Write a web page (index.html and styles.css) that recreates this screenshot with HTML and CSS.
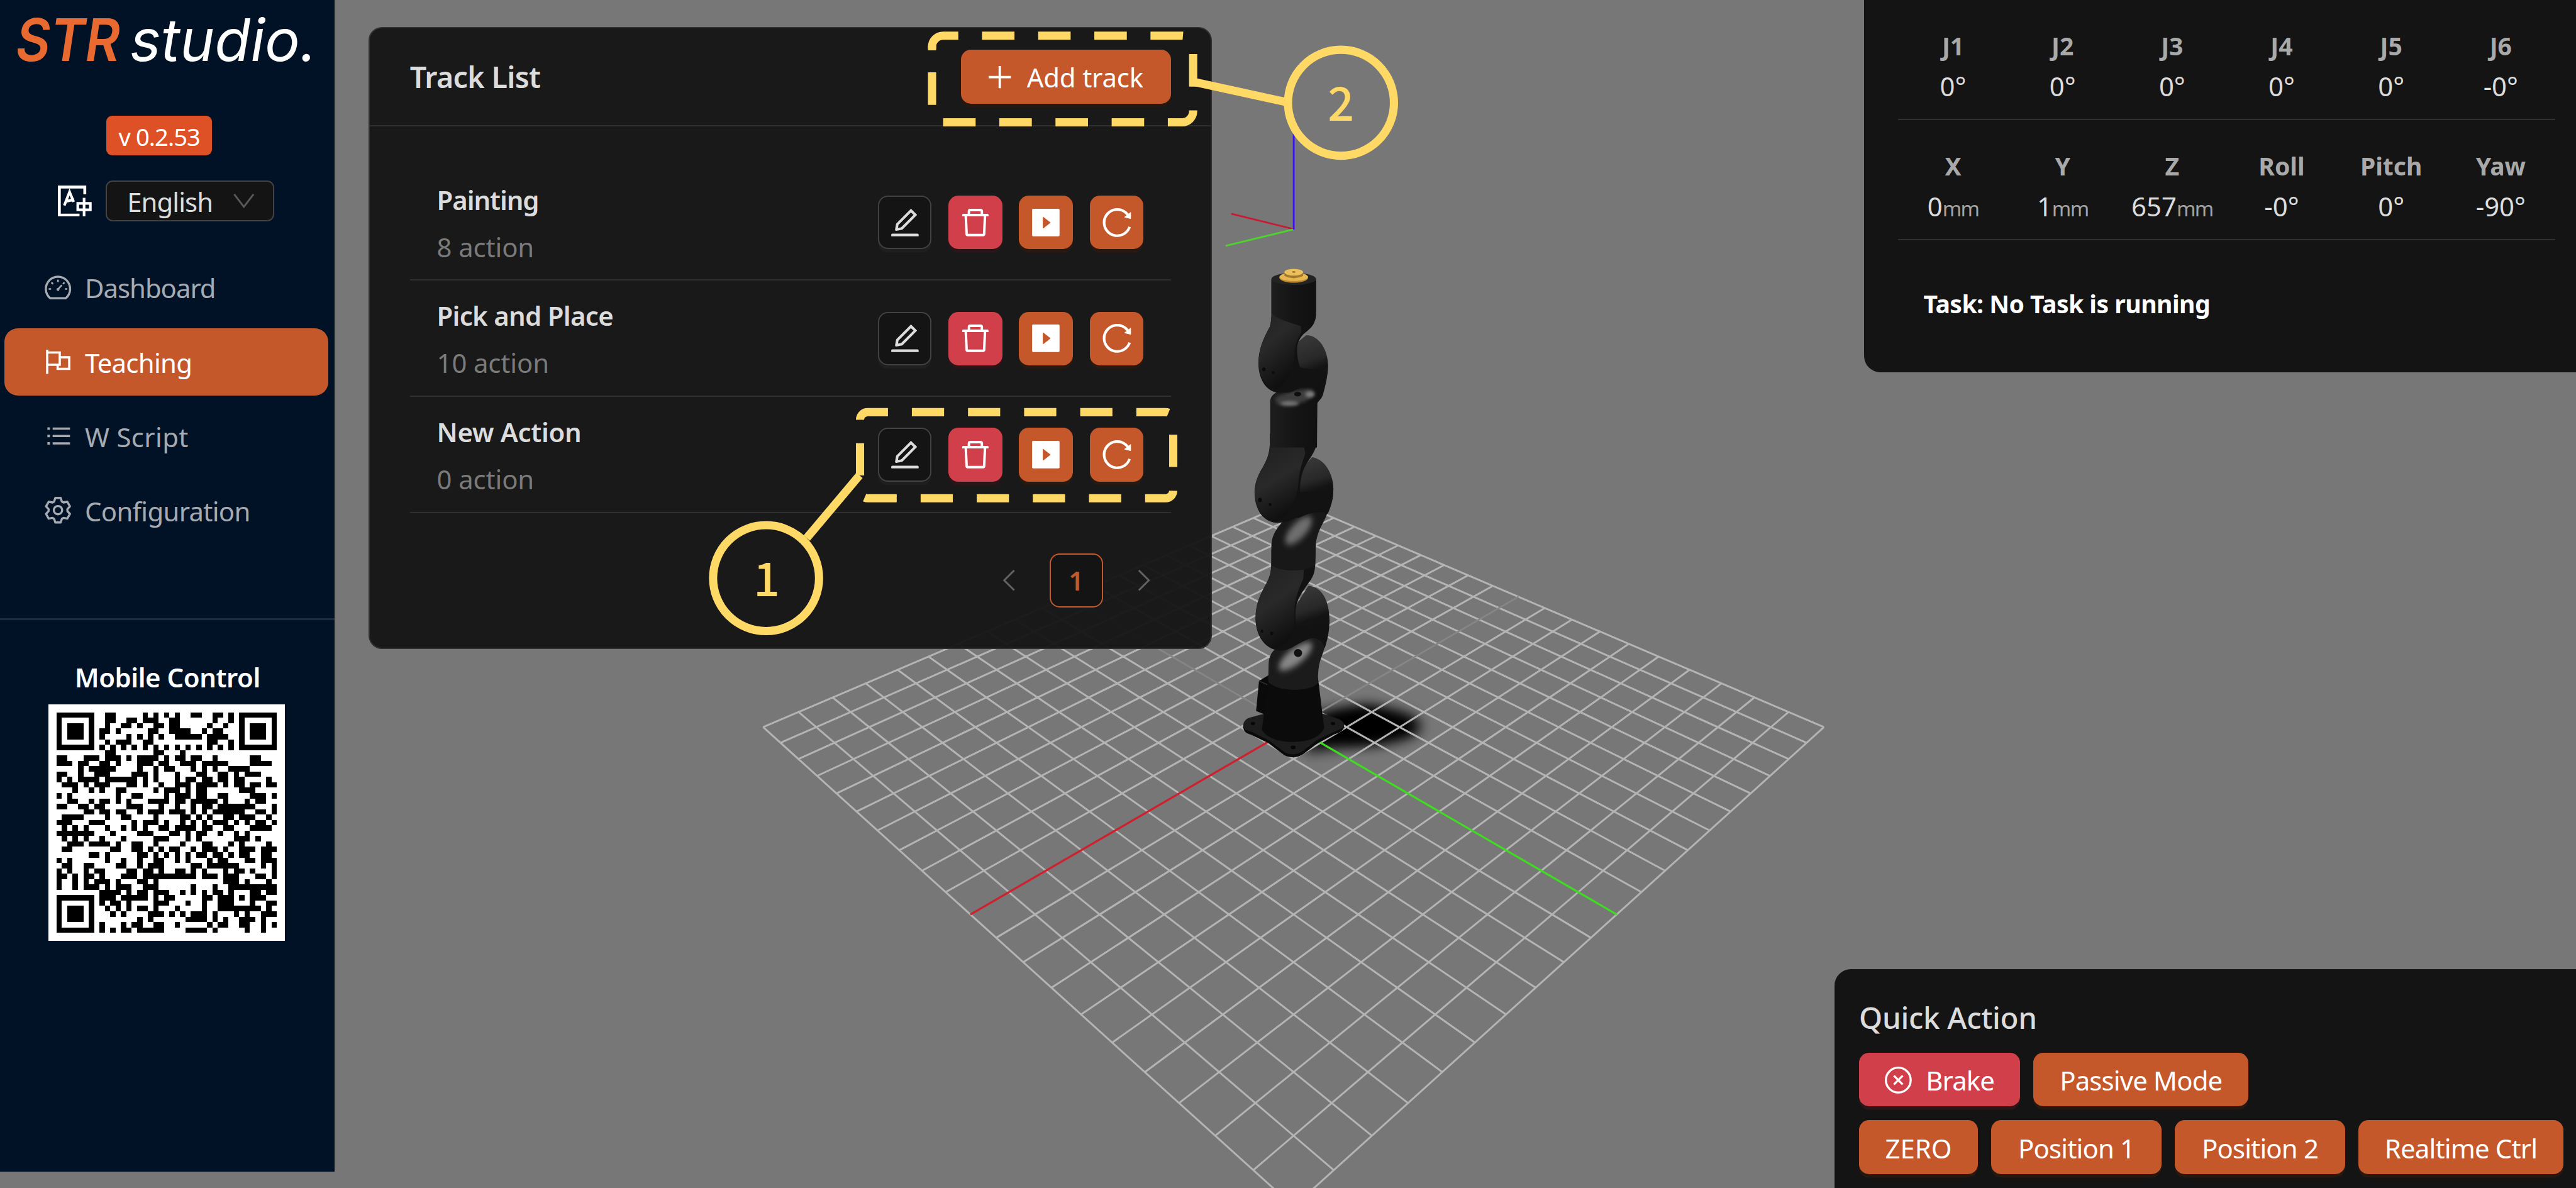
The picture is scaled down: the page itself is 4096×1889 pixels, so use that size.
FILE: index.html
```html
<!DOCTYPE html>
<html lang="en">
<head>
<meta charset="utf-8">
<title>STR studio</title>
<link rel="stylesheet" href="styles.css">
</head>
<body>
<svg class="defs" aria-hidden="true">
  <symbol id="i-edit" viewBox="0 0 1024 1024"><path d="M257.700 752c2 0 4-.2 6-.5L431.900 722c2-.4 3.900-1.300 5.300-2.800l423.900-423.900a9.960 9.960 0 0 0 0-14.100L694.900 114.900c-1.900-1.900-4.400-2.900-7.100-2.900s-5.200 1-7.100 2.900L256.800 538.800c-1.500 1.500-2.400 3.300-2.800 5.300l-29.500 168.200a33.500 33.500 0 0 0 9.400 29.800c6.600 6.400 14.900 9.900 23.800 9.900zm67.400-174.400L687.800 215l73.300 73.300-362.700 362.600-88.900 15.700 15.600-89zM880 836H144c-17.700 0-32 14.300-32 32v36c0 4.400 3.600 8 8 8h784c4.400 0 8-3.600 8-8v-36c0-17.700-14.300-32-32-32z"/></symbol>
  <symbol id="i-delete" viewBox="0 0 1024 1024"><path d="M360 184h-8c4.400 0 8-3.600 8-8v8h304v-8c0 4.400 3.600 8 8 8h-8v72h72v-80c0-35.300-28.700-64-64-64H352c-35.300 0-64 28.700-64 64v80h72v-72zm504 72H160c-17.700 0-32 14.300-32 32v32c0 4.400 3.600 8 8 8h60.400l24.700 523c1.600 34.100 29.800 61 63.900 61h454c34.200 0 62.300-26.800 63.900-61l24.700-523H888c4.400 0 8-3.600 8-8v-32c0-17.700-14.300-32-32-32zM731.300 840H292.700l-24.200-512h487l-24.200 512z"/></symbol>
  <symbol id="i-play" viewBox="0 0 1024 1024"><path fill-rule="evenodd" d="M880 112H144c-17.700 0-32 14.300-32 32v736c0 17.700 14.300 32 32 32h736c17.700 0 32-14.300 32-32V144c0-17.700-14.300-32-32-32zM641.700 520.800L442.300 677.600c-7.400 5.800-18.300.6-18.300-8.800V355.300c0-9.400 10.900-14.600 18.300-8.800l199.400 156.700a11.200 11.200 0 0 1 0 17.600z"/></symbol>
  <symbol id="i-reload" viewBox="0 0 1024 1024"><path d="M909.100 209.300l-56.400 44.100C775.800 155.100 656.200 92 521.900 92 290 92 102.300 279.500 102 511.500 101.700 743.700 289.800 932 521.900 932c181.300 0 335.800-115 394.600-276.100 1.500-4.200-.7-8.900-4.900-10.300l-56.700-19.500a8 8 0 0 0-10.100 4.800c-1.800 5-3.800 10-5.900 14.900-17.300 41-42.100 77.800-73.700 109.400A344.770 344.770 0 0 1 655.900 829c-42.300 17.900-87.400 27-133.800 27-46.500 0-91.500-9.100-133.800-27A341.500 341.500 0 0 1 279 755.200a342.160 342.160 0 0 1-73.700-109.400c-17.900-42.400-27-87.400-27-133.900s9.100-91.500 27-133.900c17.300-41 42.100-77.800 73.700-109.400 31.600-31.600 68.400-56.400 109.300-73.800 42.300-17.900 87.400-27 133.800-27 46.500 0 91.500 9.100 133.800 27a341.500 341.500 0 0 1 109.300 73.800c9.900 9.900 19.200 20.400 27.800 31.400l-60.200 47a8 8 0 0 0 3 14.100l175.600 43c5 1.200 9.900-2.600 9.900-7.700l.8-180.900c-.1-6.600-7.800-10.300-13-6.200z"/></symbol>
</svg>

<div class="app">
  <aside class="sidebar">
    <svg class="logo" viewBox="0 0 572 198" role="img" aria-label="STR studio.">
      <text class="logo-str" x="27" y="104" textLength="178" lengthAdjust="spacingAndGlyphs">STR</text>
      <text class="logo-studio" x="222" y="104" textLength="319" lengthAdjust="spacingAndGlyphs">studio.</text>
    </svg>
    <div class="version">v 0.2.53</div>
    <div class="lang">
      <svg class="lang-icon" viewBox="0 0 58 53"><path d="M46 15V2.500H2.500V50.500H37" stroke-width="5"/><path d="M11 34L20 11L27 28M14 27L28 24" stroke-width="4.500"/><path d="M34 30.500H55.500V41.500H34Z" stroke-width="4.500"/><path d="M44.800 21V53" stroke-width="4.500"/></svg>
      <div class="select"><span>English</span><svg class="caret" viewBox="0 0 36 25"><path d="M1.500 1L18 22.500L34.500 1"/></svg></div>
    </div>
    <nav class="nav">
      <a class="nav-item dashboard"><svg class="nav-icon" viewBox="0 0 1024 1024"><path d="M252 872A408 408 0 1 1 772 872Z" stroke-width="72"/><path d="M512 248V330M292 338L345 391M732 338L679 391M200 560H280M744 560H824M512 570L640 432" stroke-width="56"/><circle cx="512" cy="578" r="30" stroke-width="40"/></svg><span>Dashboard</span></a>
      <a class="nav-item active"><svg class="nav-icon" viewBox="0 0 1024 1024"><path d="M148 106V919M148 200H570V612H148M570 362H890V752H500V612" stroke-width="76"/></svg><span>Teaching</span></a>
      <a class="nav-item script"><svg class="nav-icon" viewBox="0 0 1024 1024"><path d="M332 264H916M332 512H916M332 760H916" stroke-width="72"/><path d="M156 264H240M156 512H240M156 760H240" stroke-width="84"/></svg><span>W Script</span></a>
      <a class="nav-item"><svg class="nav-icon" viewBox="0 0 1024 1024"><g transform="translate(512 512)" stroke-width="72" stroke-linejoin="round"><path d="M-130-290L-90-412H90L130-290L186-258L312-284L402-128L316-32V32L402 128L312 284L186 258L130 290L90 412H-90L-130 290L-186 258L-312 284L-402 128L-316 32V-32L-402-128L-312-284L-186-258Z"/><circle r="140"/></g></svg><span>Configuration</span></a>
    </nav>
    <div class="side-rule"></div>
    <div class="mobile-title">Mobile Control</div>
    <svg class="qr" id="qr" viewBox="0 0 404 404"></svg>
  </aside>

  <main class="stage">
    <svg class="scene" viewBox="572 0 3828 2029">
      <defs>
        <filter id="soft" x="-30%" y="-50%" width="160%" height="200%"><feGaussianBlur stdDeviation="12"/></filter>
        <filter id="glow" x="-60%" y="-80%" width="220%" height="260%"><feGaussianBlur stdDeviation="14"/></filter>
        <filter id="glint" x="-60%" y="-80%" width="220%" height="260%"><feGaussianBlur stdDeviation="8"/></filter>
        <linearGradient id="tube" x1="0" x2="1"><stop offset="0" stop-color="#1e1e1e"/><stop offset=".5" stop-color="#141414"/><stop offset="1" stop-color="#101010"/></linearGradient>
        <linearGradient id="bulb" x1="0" y1="0" x2=".35" y2="1"><stop offset="0" stop-color="#1b1b1b"/><stop offset=".3" stop-color="#232323"/><stop offset=".6" stop-color="#292929"/><stop offset="1" stop-color="#101010"/></linearGradient>
        <linearGradient id="cap" x1="0" y1="0" x2=".2" y2="1"><stop offset="0" stop-color="#3c3c3c"/><stop offset=".45" stop-color="#282828"/><stop offset=".62" stop-color="#131313"/><stop offset="1" stop-color="#121212"/></linearGradient>
      </defs>
      <path d="M2230 1222L2340 1206L2426 1242L2345 1268L2232 1285Z" fill="#000" filter="url(#soft)"/>
      <ellipse cx="2342" cy="1240" rx="84" ry="29" fill="#000" filter="url(#soft)"/>
      <g id="grid"></g>
      <g class="axis">
        <path d="M2210.300 225V392" stroke="#3a10ff"/>
        <path d="M2103.500 365L2209 391" stroke="#c81a34"/>
        <path d="M2094 420L2209 392" stroke="#4fd32c"/>
      </g>
      <!-- base, shoulder and forearm -->
      <g transform="translate(2050 740) scale(.33333 .38265)">
        <path d="M222 1306C223 1286 238 1272 262 1268L330 1252H630L700 1272C728 1280 742 1292 738 1308C734 1322 712 1332 690 1340L600 1378L530 1425C500 1446 460 1446 434 1432L352 1378L262 1340C236 1334 222 1324 222 1306Z" fill="#1d1d1d"/>
        <path d="M222 1306C226 1322 240 1328 262 1332L352 1370L434 1424C460 1438 500 1438 530 1417L600 1370L690 1332C712 1324 734 1318 738 1308V1314C734 1328 712 1338 690 1344L600 1386L530 1432C500 1450 460 1450 434 1438L352 1384L262 1346C236 1340 222 1330 222 1306Z" fill="#0a0a0a"/>
        <ellipse cx="272" cy="1296" rx="11" ry="7" fill="#060606"/><ellipse cx="682" cy="1296" rx="11" ry="7" fill="#060606"/><ellipse cx="478" cy="1402" rx="12" ry="8" fill="#060606"/>
        <path d="M303 1106L352 1080V1262L288 1240Z" fill="#0a0a0a"/><path d="M303 1106L350 1124" stroke="#333" stroke-width="4"/>
        <path d="M350 1090H605L637 1318C610 1362 550 1378 477 1378C405 1378 345 1362 318 1325Z" fill="#0b0b0b"/>
        <path d="M352 1040C352 1000 365 980 385 965L520 900L650 880C645 960 628 985 615 1020C606 1050 605 1080 605 1115C570 1155 400 1158 350 1110Z" fill="#1b1b1b"/>
        <ellipse cx="490" cy="996" rx="100" ry="36" transform="rotate(-34 490 996)" fill="#868686" filter="url(#glow)"/>
        <ellipse cx="503" cy="981" rx="21" ry="18" fill="#111"/>
        <path d="M555 682C625 682 664 750 664 832C664 890 652 925 640 960C630 925 600 910 560 915L490 930L470 800Z" fill="url(#cap)"/>
        <path d="M367 495C368 540 368 590 363 615C358 645 345 665 330 690C300 735 285 775 285 830C288 910 340 970 415 970C465 970 500 935 560 918C640 895 660 880 664 832C620 860 560 870 495 862C488 830 488 790 495 765C508 725 540 690 562 662C585 635 590 615 591 580L593 500Z" fill="#121212"/>
        <path d="M366 520C368 590 366 610 360 628C352 655 340 670 325 695C298 740 285 780 286 830C290 905 340 960 400 962C450 955 490 880 485 810C480 740 510 690 530 650L540 500Z" fill="url(#bulb)"/>
        <path d="M367 500C367 455 395 425 420 398L560 345L655 350C640 400 600 430 594 500L591 590C540 620 420 620 366 590Z" fill="#181818"/>
        <ellipse cx="506" cy="434" rx="86" ry="36" transform="rotate(-42 506 434)" fill="#6e6e6e" filter="url(#glow)"/>
        <path d="M575 107C640 115 684 180 684 250C684 300 668 335 655 360C630 350 590 352 555 360L500 380L480 200Z" fill="url(#cap)"/>
        <path d="M360 0L358 55C356 90 345 115 325 148C295 190 280 225 280 265C282 350 332 400 400 400C460 400 500 370 560 355C620 345 670 330 680 290C682 270 684 258 684 245C630 265 560 262 513 262C512 225 518 190 535 155C555 120 590 85 596 55L600 0Z" fill="#121212"/>
        <path d="M360 0L358 60C354 95 345 118 325 150C295 192 281 225 281 265C285 345 330 390 390 392C450 385 500 290 505 220C508 170 525 130 540 90L520 0Z" fill="url(#bulb)"/>
        <g fill="#0b0b0b"><circle cx="308" cy="298" r="10"/><circle cx="360" cy="318" r="7"/><circle cx="318" cy="884" r="7"/><circle cx="368" cy="894" r="8"/></g>
      </g>
      <!-- wrist and tool flange -->
      <g transform="translate(2050 200) scale(.33333 .35714)">
        <path d="M360 1360C362 1335 380 1320 410 1308L520 1280L636 1270C632 1320 615 1350 602 1368L600 1580H360Z" fill="url(#tube)"/>
        <path d="M385 1345C410 1325 500 1300 560 1300C590 1304 592 1325 565 1345C520 1380 420 1385 395 1372Z" fill="#3c3c3c" filter="url(#glint)"/>
        <ellipse cx="460" cy="1370" rx="46" ry="10" fill="#7a7a7a" filter="url(#glint)"/>
        <ellipse cx="564" cy="1326" rx="24" ry="14" fill="#808080" filter="url(#glint)"/>
        <ellipse cx="501" cy="1325" rx="18" ry="11" fill="#0f0f0f"/>
        <path d="M545 1043C612 1043 657 1115 657 1190C655 1245 642 1290 630 1330C625 1345 612 1356 604 1364C615 1320 620 1295 610 1280C580 1290 545 1296 516 1294L470 1100Z" fill="url(#cap)"/>
        <path d="M367 775V930C367 965 364 985 358 1003C320 1068 300 1115 300 1180C302 1262 345 1312 400 1318H445C475 1318 495 1300 516 1292C560 1280 630 1290 654 1225C600 1200 540 1210 512 1195C500 1160 495 1120 500 1090C508 1060 525 1040 548 1025C575 1005 595 975 595 940V775Z" fill="#121212"/>
        <path d="M367 775V930C367 965 364 985 358 1003C320 1068 301 1115 301 1180C304 1250 345 1295 390 1300C440 1290 485 1210 485 1130C487 1090 500 1060 520 1030L500 775Z" fill="url(#bulb)"/>
        <path d="M367 775V940C410 975 480 985 560 1014C580 1000 595 975 595 940V775Z" fill="url(#tube)"/>
        <ellipse cx="481" cy="774" rx="114" ry="29" fill="#232323"/>
        <ellipse cx="481" cy="768" rx="74" ry="24" fill="#b98a33"/><ellipse cx="481" cy="764" rx="73" ry="20" fill="#e6b750"/>
        <path d="M433 742V760Q481 782 529 760V742Z" fill="#a1772c"/><ellipse cx="481" cy="742" rx="48" ry="16" fill="#ecbf5a"/><ellipse cx="481" cy="741" rx="9" ry="3.500" fill="#8a6420"/>
        <g fill="#0b0b0b"><circle cx="328" cy="1206" r="9"/><circle cx="376" cy="1222" r="7"/></g>
      </g>
    </svg>

    <section class="card">
      <header class="card-head"><h2>Track List</h2>
        <button class="btn add"><svg class="plus" viewBox="0 0 38 38"><path d="M19 0V38M0 19H38"/></svg><span>Add track</span></button></header>
      <ul class="tracks">
        <li class="track"><div class="info"><b>Painting</b><i>8 action</i></div>
          <div class="acts"><button class="sq dark"><svg><use href="#i-edit"/></svg></button><button class="sq red"><svg><use href="#i-delete"/></svg></button><button class="sq"><svg><use href="#i-play"/></svg></button><button class="sq"><svg><use href="#i-reload"/></svg></button></div></li>
        <li class="track"><div class="info"><b>Pick and Place</b><i>10 action</i></div>
          <div class="acts"><button class="sq dark"><svg><use href="#i-edit"/></svg></button><button class="sq red"><svg><use href="#i-delete"/></svg></button><button class="sq"><svg><use href="#i-play"/></svg></button><button class="sq"><svg><use href="#i-reload"/></svg></button></div></li>
        <li class="track"><div class="info"><b>New Action</b><i>0 action</i></div>
          <div class="acts"><button class="sq dark"><svg><use href="#i-edit"/></svg></button><button class="sq red"><svg><use href="#i-delete"/></svg></button><button class="sq"><svg><use href="#i-play"/></svg></button><button class="sq"><svg><use href="#i-reload"/></svg></button></div></li>
      </ul>
      <div class="pager">
        <span class="page-nav"><svg viewBox="0 0 22 36"><path d="M20 1L3 18L20 35"/></svg></span>
        <span class="page">1</span>
        <span class="page-nav"><svg viewBox="0 0 22 36"><path d="M2 1L19 18L2 35"/></svg></span>
      </div>
    </section>

    <section class="status">
      <div class="axes"><div><b>J1</b><span>0°</span></div><div><b>J2</b><span>0°</span></div><div><b>J3</b><span>0°</span></div><div><b>J4</b><span>0°</span></div><div><b>J5</b><span>0°</span></div><div><b>J6</b><span>-0°</span></div></div>
      <div class="axes"><div><b>X</b><span>0<small>mm</small></span></div><div><b>Y</b><span>1<small>mm</small></span></div><div><b>Z</b><span>657<small>mm</small></span></div><div><b>Roll</b><span>-0°</span></div><div><b>Pitch</b><span>0°</span></div><div><b>Yaw</b><span>-90°</span></div></div>
      <p class="task">Task: No Task is running</p>
    </section>

    <section class="quick">
      <h3>Quick Action</h3>
      <div class="quick-row">
        <button class="btn w-brake red"><svg class="x-circle" viewBox="0 0 46 46"><circle cx="23" cy="23" r="21.200"/><path d="M15.500 15.500L30.500 30.500M30.500 15.500L15.500 30.500"/></svg><span>Brake</span></button>
        <button class="btn w-passive"><span>Passive Mode</span></button>
      </div>
      <div class="quick-row">
        <button class="btn w-zero"><span>ZERO</span></button>
        <button class="btn w-pos"><span>Position 1</span></button>
        <button class="btn w-pos"><span>Position 2</span></button>
        <button class="btn w-real"><span>Realtime Ctrl</span></button>
      </div>
    </section>
  </main>

  <svg class="callouts" viewBox="0 0 4400 2029">
    <path d="M1592 80A19 19 0 0 1 1611 61H2019A19 19 0 0 1 2038 80V190A19 19 0 0 1 2019 209H1611A19 19 0 0 1 1592 190V80" stroke-dasharray="55.500 40.450"/>
    <path d="M1592 86V78"/>
    <path d="M2040 140L2200 175"/>
    <circle cx="2290.500" cy="175.500" r="90.500"/>
    <path d="M1469 717A13 13 0 0 1 1482 704H1991A13 13 0 0 1 2004 717V838A13 13 0 0 1 1991 851H1482A13 13 0 0 1 1469 838Z" stroke-dasharray="55 40.850"/>
    <path d="M1468 812L1378 919"/>
    <circle cx="1308.500" cy="987.500" r="90.500"/>
    <text x="2290.500" y="206">2</text>
    <text x="1309.500" y="1018">1</text>
  </svg>
</div>
<script src="scene.js"></script>
</body>
</html>
```
FILE: styles.css
```css
/* 1rem = 100 design units; the design is 44rem wide */
html { font-size: 93.0909px; }
* { box-sizing: border-box; }
body { margin: 0; background: #777; color: #dcdcdc; font-family: "Noto Sans", "Open Sans", sans-serif; font-size: .45rem; overflow: hidden; }
h2, h3, p, ul { margin: 0; padding: 0; font-weight: 600; }
button { border: 0; margin: 0; padding: 0; font: inherit; letter-spacing: inherit; color: #fff; }
i { font-style: normal; }
svg { display: block; }
.defs { position: absolute; width: 0; height: 0; }
.app { position: relative; display: flex; align-items: flex-start; width: 44rem; height: 20.29rem; overflow: hidden; }

/* sidebar */
.sidebar { flex: none; width: 5.72rem; height: 20.01rem; background: #011227; display: flex; flex-direction: column; }
.logo { width: 5.72rem; height: 1.98rem; flex: none; }
.logo text { font-family: Inter, "Open Sans", sans-serif; font-style: italic; font-size: 100px; }
.logo-str { fill: #e96a31; font-weight: 600; }
.logo-studio { fill: #fff; font-weight: 400; }
.version { margin-left: 1.82rem; width: 1.8rem; height: .67rem; line-height: .71rem; border-radius: .1rem; background: #de5126; color: #fff; text-align: center; font-size: .41rem; letter-spacing: -.025em; }
.lang { display: flex; align-items: center; margin: .44rem 0 0 .99rem; height: .69rem; }
.lang-icon { width: .58rem; height: .53rem; margin-right: .23rem; fill: none; stroke: #fff; }
.select { display: flex; align-items: center; justify-content: space-between; width: 2.88rem; height: .7rem; line-height: .7rem; padding: .02rem .31rem 0 .35rem; border: .03rem solid #424242; border-radius: .12rem; background: #141414; letter-spacing: -.022em; }
.caret { width: .36rem; height: .25rem; margin-bottom: .02rem; fill: none; stroke: #5a5a5a; stroke-width: 3; }
.nav { display: flex; flex-direction: column; gap: .12rem; margin: .555rem .11rem 0 .07rem; }
.nav-item { display: flex; align-items: center; gap: .2rem; height: 1.15rem; padding-left: .66rem; border-radius: .23rem; color: #a6abb2; letter-spacing: -.0165em; }
.nav-item span { padding-top: .02rem; }
.nav-item.dashboard { letter-spacing: -.0244em; }
.nav-item.script { letter-spacing: .0086em; }
.nav-icon { width: .52rem; height: .52rem; fill: none; stroke: currentColor; }
.active { background: #c5582b; color: #fff; }
.side-rule { flex: none; margin-top: 1.265rem; height: .03rem; background: #1f2c3a; }
.mobile-title { margin-top: .68rem; line-height: .6rem; text-align: center; color: #fff; font-weight: 600; letter-spacing: -.0106em; }
.qr { width: 4.04rem; height: 4.04rem; margin: .16rem 0 0 .83rem; background: #fff; }

/* 3d stage */
.stage { position: relative; flex: 1; height: 20.29rem; }
.scene { width: 38.28rem; height: 20.29rem; }
.axis path { stroke-width: 3; fill: none; }

/* shared buttons */
.btn { display: flex; align-items: center; justify-content: center; height: .92rem; padding-top: .02rem; border-radius: .17rem; background: #c5582b; box-shadow: 0 .06rem 0 #26180f; }
.btn.red, .sq.red { background: #d1404a; box-shadow: 0 .06rem 0 #2c1518; }

/* track list */
.card { position: absolute; left: .58rem; top: .46rem; width: 14.4rem; height: 10.63rem; border: .03rem solid #303030; border-radius: .23rem; background: rgba(20,20,20,.95); }
.card-head { display: flex; align-items: center; justify-content: space-between; height: 1.68rem; padding: 0 .68rem; border-bottom: .03rem solid #303030; }
.card-head h2 { font-size: .5rem; letter-spacing: -.0135em; }
.add { width: 3.58rem; letter-spacing: -.004em; }
.plus { width: .38rem; height: .38rem; margin-right: .27rem; fill: none; stroke: #fff; stroke-width: 4; }
.tracks { list-style: none; margin: .65rem .68rem 0; font-weight: 400; }
.track { display: flex; align-items: center; justify-content: space-between; height: 1.985rem; padding: 0 .465rem 0 .46rem; border-bottom: .03rem solid #303030; }
.info { display: flex; flex-direction: column; gap: .175rem; margin-top: .05rem; line-height: .63rem; }
.info b { font-weight: 600; letter-spacing: -.0165em; }
.track:first-child b { letter-spacing: -.026em; }
.track:last-child b { letter-spacing: -.008em; }
.info i { color: #7b7b7b; letter-spacing: -.003em; }
.acts { display: flex; gap: .287rem; margin-top: .01rem; }
.sq { display: flex; align-items: center; justify-content: center; width: .92rem; height: .92rem; border-radius: .17rem; background: #c5582b; box-shadow: 0 .06rem 0 #2a190f; }
.sq.dark { background: #141414; border: .03rem solid #424242; color: #dcdcdc; box-shadow: 0 .06rem 0 #1f1f1f; }
.sq svg { width: .6rem; height: .6rem; fill: currentColor; }
.pager { display: flex; justify-content: flex-end; align-items: center; gap: .235rem; margin: .69rem .68rem 0; }
.page { width: .92rem; height: .92rem; line-height: .89rem; border: .03rem solid #c5582b; border-radius: .17rem; background: #141414; color: #c5582b; text-align: center; font-weight: 600; }
.page-nav { display: flex; justify-content: center; width: .92rem; }
.page-nav svg { width: .22rem; height: .36rem; fill: none; stroke: #626262; stroke-width: 3.2; }

/* joint and pose readout */
.status { position: absolute; right: 0; top: 0; width: 12.155rem; height: 6.36rem; padding: 0 .35rem 0 .58rem; border-bottom-left-radius: .28rem; background: #141414; }
.axes { display: grid; grid-template-columns: repeat(6, 1fr); height: 2.05rem; padding-top: .445rem; border-bottom: .03rem solid #303030; text-align: center; line-height: .68rem; }
.axes div { display: flex; flex-direction: column; }
.axes b { font-weight: 700; font-size: .42rem; color: #a9a9a9; }
.axes small { font-size: .35rem; color: #a3a3a3; letter-spacing: -.05em; line-height: 1; }
.task { padding: .735rem 0 0 .43rem; line-height: .7rem; font-weight: 700; font-size: .42rem; color: #fff; letter-spacing: -.013em; }

/* quick actions */
.quick { position: absolute; right: 0; bottom: 0; width: 12.66rem; height: 3.74rem; padding: .475rem 0 0 .415rem; border-top-left-radius: .28rem; background: #141414; }
.quick h3 { line-height: .7rem; margin-bottom: .255rem; font-size: .51rem; font-weight: 500; letter-spacing: -.006em; }
.quick-row { display: flex; gap: .23rem; margin-bottom: .235rem; letter-spacing: -.02em; }
.x-circle { width: .46rem; height: .46rem; margin-right: .24rem; fill: none; stroke: #fff; stroke-width: 3.6; }
.w-brake { width: 2.75rem; }
.w-passive { width: 3.67rem; }
.w-zero { width: 2.03rem; letter-spacing: 0; }
.w-pos { width: 2.905rem; }
.w-real { width: 3.5rem; }

/* numbered callouts */
.callouts { position: absolute; left: 0; top: 0; width: 44rem; height: 20.29rem; fill: none; stroke: #ffd966; stroke-width: 14; }
.callouts text { fill: #ffd966; stroke: none; font: 500 79px "Noto Sans CJK SC", sans-serif; text-anchor: middle; }
```
FILE: scene.js
```js
const NS = 'http://www.w3.org/2000/svg';

// Ground plane: 20 x 20 cells seen in perspective, symmetric about x = 2210
function project(u, v) {
  const a = u - v, b = u + v, w = 1 - 0.01793 * b;
  return [2210 - 45.3 * a / w, (1242 + 3.99 * b) / w];
}
const grid = document.getElementById('grid');
function line(u1, v1, u2, v2, color, width) {
  const p = project(u1, v1), q = project(u2, v2);
  const el = document.createElementNS(NS, 'path');
  el.setAttribute('d', `M${p[0].toFixed(1)} ${p[1].toFixed(1)}L${q[0].toFixed(1)} ${q[1].toFixed(1)}`);
  el.setAttribute('stroke', color);
  el.setAttribute('stroke-width', width);
  grid.appendChild(el);
}
for (let i = -10; i <= 10; i++) {
  if (i === 0) continue;
  line(i, -10, i, 10, '#b4b4b4', 3.2);
  line(-10, i, 10, i, '#b4b4b4', 3.2);
}
line(-10, 0, 0, 0, '#868686', 3);
line(0, -10, 0, 0, '#868686', 3);
line(0, 0, 10, 0, '#d01f2d', 3.4);
line(0, 0, 0, 10, '#3fdc22', 3.4);

// Pairing code, one string per row, each token "start-end" in modules
const rows = [
  '0-7 9-11 16-17 18-19 20-21 22-23 25-27 29-31 32-33 34-41',
  '0-1 6-7 9-11 13-15 16-19 21-23 29-30 32-33 34-35 40-41',
  '0-1 2-5 6-7 9-10 12-14 15-16 18-20 21-23 28-29 31-32 34-35 36-39 40-41',
  '0-1 2-5 6-7 8-10 11-12 17-19 21-25 27-28 29-31 34-35 36-39 40-41',
  '0-1 2-5 6-7 8-9 13-14 15-16 17-18 19-20 22-27 28-32 34-35 36-39 40-41',
  '0-1 6-7 9-10 11-14 16-18 28-30 32-33 34-35 40-41',
  '0-7 8-9 10-11 12-13 14-15 16-17 18-19 20-21 22-23 24-25 26-27 28-29 30-31 32-33 34-41',
  '9-11 18-20 23-24',
  '0-2 5-8 9-12 13-14 15-19 20-21 22-24 25-27 29-30 36-38',
  '0-3 4-6 8-10 11-12 15-18 19-21 23-26 27-32 36-40',
  '4-5 6-11 15-16 18-19 20-22 25-26 27-28 29-30 32-36',
  '0-2 4-5 7-10 14-17 18-19 22-23 26-28 30-32 33-34 35-38',
  '0-1 2-3 4-8 9-15 16-17 18-19 22-23 24-26 27-29 30-32 33-35 39-40',
  '1-4 5-6 7-10 13-15 16-17 19-20 22-25 26-30 31-32 33-35 36-38 39-41',
  '3-4 6-7 8-9 11-13 18-19 20-23 24-25 26-28 34-37',
  '0-1 2-3 11-12 14-16 20-21 22-25 26-28 30-32 36-39 40-41',
  '2-4 6-7 8-10 11-12 13-14 17-21 22-24 25-30 31-32 35-36 37-39',
  '0-2 4-6 7-9 13-16 19-20 22-23 25-26 27-29 30-37 40-41',
  '5-7 8-10 11-13 15-16 17-20 21-24 25-26 27-28 29-35 37-39 40-41',
  '1-5 9-10 12-14 18-19 23-25 26-27 28-29 31-33 34-37 39-40',
  '0-3 6-9 14-15 16-19 20-21 23-24 25-26 27-28 29-32 33-34 35-36 37-39 40-41',
  '1-2 3-4 5-6 9-10 12-13 14-15 16-17 19-21 22-26 27-29 31-33 36-40',
  '0-7 10-11 15-18 21-23 24-25 26-28 30-31 33-34 35-36',
  '1-2 3-4 5-6 8-9 12-13 18-21 24-25 26-27 33-36 37-38',
  '2-5 6-10 11-12 14-16 18-19 23-24 27-29 32-33 34-35 39-40',
  '1-3 10-12 14-16 17-18 19-20 21-23 25-26 27-30 31-32 34-37 38-41',
  '6-8 9-10 15-17 18-19 20-21 22-23 24-25 26-28 29-31 32-33 34-36 38-40',
  '0-1 2-3 9-10 12-13 15-16 18-20 22-23 24-25 28-29 30-32 35-37 38-41',
  '1-3 5-7 11-13 15-16 17-20 25-27 28-34 38-39 40-41',
  '0-1 2-3 5-6 7-9 13-15 16-18 19-20 22-24 25-26 27-28 31-32 33-35 36-37 40-41',
  '0-2 3-4 5-7 8-9 12-15 16-26 27-30 31-34 37-39 40-41',
  '0-1 3-4 5-6 7-10 11-12 15-17 18-19 31-34 35-36 39-40',
  '0-1 3-4 5-8 9-10 11-14 16-19 25-26 29-30 32-41',
  '8-12 13-14 15-17 18-21 23-24 25-26 27-28 29-31 32-33 36-38 39-41',
  '0-7 8-11 12-17 18-19 20-22 27-29 30-33 34-35 36-39',
  '0-1 6-7 8-9 10-12 13-14 18-21 24-25 27-28 30-33 36-37 39-41',
  '0-1 2-5 6-7 9-10 11-12 13-14 15-17 18-19 22-23 27-28 30-38 39-40',
  '0-1 2-5 6-7 10-11 12-13 17-20 21-22 23-24 25-28 29-30 33-34 35-36 38-41',
  '0-1 2-5 6-7 15-16 17-18 24-28 29-30 31-32 34-37 38-39',
  '0-1 6-7 8-9 12-13 14-16 18-20 22-23 28-29 30-32 34-36 38-39 40-41',
  '0-7 8-9 10-11 12-14 15-20 24-28 29-30 35-36 38-39'
];
const cell = 9.18;
const code = document.createElementNS(NS, 'path');
code.setAttribute('d', rows.map((row, y) => row.split(' ').map(run => {
  const [s, e] = run.split('-').map(Number);
  return `M${(13.8 + s * cell).toFixed(2)} ${(13.8 + y * cell).toFixed(2)}h${((e - s) * cell).toFixed(2)}v${cell}H${(13.8 + s * cell).toFixed(2)}z`;
}).join('')).join(''));
code.setAttribute('shape-rendering', 'crispEdges');
document.getElementById('qr').appendChild(code);
```
